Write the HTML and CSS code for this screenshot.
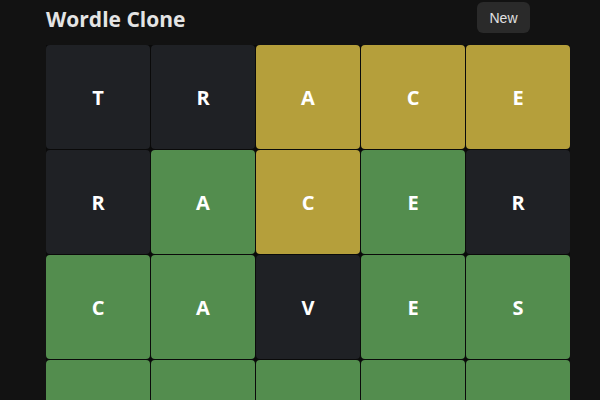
FILE: index.html
```html
<!DOCTYPE html>
<html lang="en">
<head>
<meta charset="UTF-8">
<meta name="viewport" content="width=device-width, initial-scale=1.0">
<title>Wordle Clone</title>
<link rel="stylesheet" href="styles.css">
</head>
<body>

<div class="app">
    <!-- Header -->
    <div class="header">
        <h1 class="title">Wordle Clone</h1>
        <button class="new-btn">New</button>
    </div>

    <!-- Papan -->
    <div class="board">
        <div class="tile absent">T</div>
        <div class="tile absent">R</div>
        <div class="tile present">A</div>
        <div class="tile present">C</div>
        <div class="tile present">E</div>

        <div class="tile absent">R</div>
        <div class="tile correct">A</div>
        <div class="tile present">C</div>
        <div class="tile correct">E</div>
        <div class="tile absent">R</div>

        <div class="tile correct">C</div>
        <div class="tile correct">A</div>
        <div class="tile absent">V</div>
        <div class="tile correct">E</div>
        <div class="tile correct">S</div>

        <div class="tile correct"></div>
        <div class="tile correct"></div>
        <div class="tile correct"></div>
        <div class="tile correct"></div>
        <div class="tile correct"></div>
    </div>
</div>

</body>
</html>
```

FILE: styles.css
```css
body {
    margin: 0;
    background: #121212;
    font-family: 'Open Sans', sans-serif;
    color: #e6e6e6;
    overflow: hidden;
}

.app {
    padding: 2px 0 0 46px;
}

/* Header */
.header {
    display: flex;
    align-items: center;
    width: 484px;
    justify-content: space-between;
    height: 31px;
    margin-bottom: 12px;
}
.title {
    margin: 0;
    font-size: 21px;
    font-weight: bold;
    color: #e4e4e4;
    padding-top: 2px;
}
.new-btn {
    background: #2a2a2a;
    color: #e0e0e0;
    border: none;
    border-radius: 6px;
    font-family: 'Liberation Sans', Arial, sans-serif;
    font-size: 14px;
    width: 53px;
    height: 31px;
    padding: 0;
}

/* Papan */
.board {
    display: grid;
    grid-template-columns: repeat(5, 104px);
    grid-auto-rows: 104px;
    gap: 1px;
    width: max-content;
    background: #0a0a0a;
}
.tile {
    display: flex;
    justify-content: center;
    align-items: center;
    border-radius: 4px;
    font-size: 20px;
    font-weight: bold;
    color: #fff;
}
.absent { background: #1f2125; }
.present { background: #b59f3b; }
.correct { background: #538d4e; }
```
